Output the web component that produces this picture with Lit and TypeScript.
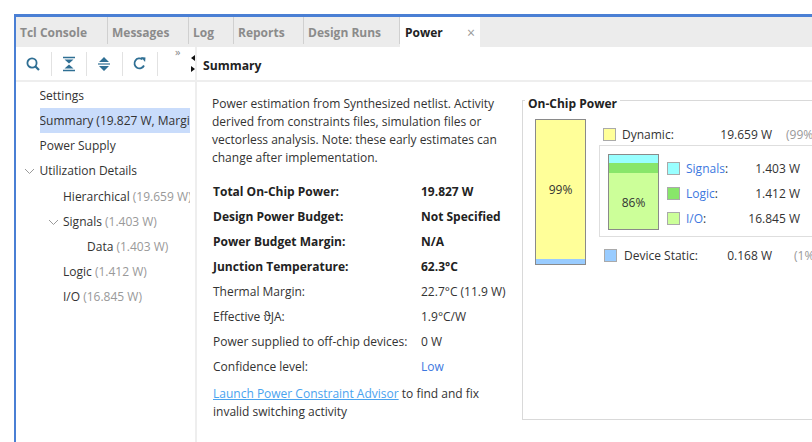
import { LitElement, html, css, svg } from "lit";
import { customElement } from "lit/decorators.js";

const tabs = ["Tcl Console", "Messages", "Log", "Reports", "Design Runs"];
const tabW = [92, 81, 45, 70, 96];

@customElement("app-root")
export class AppRoot extends LitElement {
  static styles = css`
    :host { display: block; width: 812px; height: 442px; overflow: hidden; background: #fff;
      font-family: "Open Sans", "Noto Sans", sans-serif; font-size: 12px; color: #333; box-sizing: border-box; padding: 14px 0 0 14px; }
    .frame { height: 428px; border-top: 3px solid #4a7fd4; border-left: 2px solid #4a7fd4; display: flex; flex-direction: column; overflow: hidden; }
    .tabs { height: 30px; background: #ececec; display: flex; flex: none; }
    .tab { box-sizing: border-box; height: 27px; padding-left: 4px; line-height: 32px; font-weight: 700; color: #8b8b8b; border-right: 1px solid #d0d0d0; flex: none; }
    .tab.on { width: 80px; height: 30px; background: #fff; color: #222; border: none; padding-left: 5px; display: flex; justify-content: space-between; padding-right: 5px; }
    .tab.on span:last-child { color: #999; font-weight: 400; font-size: 14px; }
    .main { flex: 1; display: grid; grid-template-columns: 181px 1fr; grid-template-rows: 35px 1fr; min-height: 0; }
    .tools { border-bottom: 2px solid #eeeeee; border-right: 2px solid #eeeeee; display: flex; align-items: center; position: relative; height: 35px; box-sizing: border-box; }
    .tool { width: 35.5px; height: 24px; display: flex; align-items: center; justify-content: center; border-right: 1px solid #e2e2e2; box-sizing: border-box; flex: none; }
    .more { position: absolute; left: 159px; top: -2px; font-size: 11px; color: #888; line-height: 14px; }
    .grip { position: absolute; left: 174px; top: 8px; }
    .head { border-bottom: 2px solid #eeeeee; height: 35px; box-sizing: border-box; padding-left: 6px; font-weight: 700; color: #222; line-height: 37px; font-size: 12.2px; }
    .tree { border-right: 2px solid #eeeeee; padding-top: 1px; overflow: hidden; min-height: 0; }
    .row { height: 25px; line-height: 25px; white-space: nowrap; overflow: hidden; width: 150px; position: relative; color: #333; }
    .row .g { color: #999; }
    .row.sel { background: #c9dcfb; }
    .row.l0 { margin-left: 23.5px; }
    .row.l1 { margin-left: 47px; width: 127px; }
    .row.l2 { margin-left: 71px; width: 110px; }
    .row.gapped { margin-top: 1px; }
    .chevwrap { position: relative; }
    .chev { position: absolute; top: 10px; }
    .content { display: flex; min-width: 0; overflow: hidden; }
    .left { width: 325px; flex: none; padding: 13px 0 0 15px; box-sizing: border-box; }
    .para { line-height: 18px; width: 295px; margin: 0; }
    .table { margin-top: 12px; display: grid; grid-template-columns: 208px 1fr; grid-auto-rows: 25px; line-height: 25px; white-space: nowrap; }
    .table > div { padding-left: 1px; }
    .b { font-weight: 700; color: #222; }
    .lnk { color: #3d78e0; }
    .advisor { margin: 6px 0 0 1px; line-height: 18px; }
    .advisor a { color: #4aa3ef; text-decoration: underline; }
    .panel { flex: none; width: 330px; height: 320px; margin: 18px 0 0 0; border: 1px solid #d9d9d9; box-sizing: border-box; position: relative; color: #333; }
    .legend { position: absolute; left: 2px; top: -5px; padding: 0 3px; background: #fff; font-weight: 700; color: #222; line-height: 15px; }
    .body { display: flex; padding: 18px 0 0 12px; gap: 17px; }
    .bar { width: 51px; height: 146px; box-sizing: border-box; border: 1.5px solid #8a8a8a; display: flex; flex-direction: column; flex: none; }
    .fill { background: #ffff99; flex: 1; display: flex; align-items: center; justify-content: center; }
    .cap { background: #99ccff; height: 5px; }
    .side { flex: 1; min-width: 0; }
    .line { display: grid; align-items: center; height: 16px; white-space: nowrap; }
    .line.dyn { grid-template-columns: 13px 6px 90px 60px 14px auto; margin-top: 7px; }
    .line.sta { grid-template-columns: 13px 7px 100px 48px 22px auto; margin: 10px 0 0 1px; }
    .r { text-align: right; }
    .g2 { color: #999; }
    .sw { width: 13px; height: 13px; box-sizing: border-box; border: 1.5px solid #aaa; display: block; }
    .inner { margin: 3px 0 0 -4px; height: 92px; border: 1px solid #dedede; border-right: none; box-sizing: border-box; padding: 8px 0 0 8px; display: flex; gap: 8px; width: 220px; }
    .ibar { width: 51px; height: 76px; box-sizing: border-box; border: 1.5px solid #8a8a8a; display: flex; flex-direction: column; flex: none; }
    .lg { display: flex; flex-direction: column; gap: 9px; padding-top: 6px; }
    .line.it { grid-template-columns: 13px 6px 50px 64px; }
    .s-cy { background: #99ffff; } .s-gr { background: #88e66a; } .s-li { background: #ccff99; }
    .c1 { height: 8px; } .c2 { height: 10px; }
    .c3 { flex: 1; display: flex; align-items: center; justify-content: center; padding-top: 2px; }
  `;

  render() {
    const icon = (c: unknown) => html`<div class="tool">${c}</div>`;
    return html`<div class="frame">
      <div class="tabs">
        ${tabs.map((t, i) => html`<div class="tab" style="width:${tabW[i]}px">${t}</div>`)}
        <div class="tab on"><span>Power</span><span>×</span></div>
      </div>
      <div class="main">
        <div class="tools">
          ${icon(svg`<svg width="16" height="16" viewBox="0 0 16 16"><circle cx="7" cy="7" r="4.6" fill="none" stroke="#2f6f94" stroke-width="1.8"/><path d="M10.5 10.5L14 14" stroke="#2f6f94" stroke-width="2.2"/></svg>`)}
          ${icon(svg`<svg width="14" height="16" viewBox="0 0 14 16"><path d="M1 1.5h12M1 14.5h12" stroke="#2f6f94" stroke-width="1.5"/><path d="M2.5 3.5h9L7 7.5zM2.5 12.5h9L7 8.5z" fill="#2f6f94"/></svg>`)}
          ${icon(svg`<svg width="14" height="16" viewBox="0 0 14 16"><path d="M7 1l5 5H2zM7 15l5-5H2z" fill="#2f6f94"/><path d="M1 8h12" stroke="#2f6f94" stroke-width="1.2"/></svg>`)}
          ${icon(svg`<svg width="15" height="15" viewBox="0 0 15 15"><path d="M12 9.5A5 5 0 1 1 10.5 3.4" fill="none" stroke="#2f6f94" stroke-width="1.8"/><path d="M8.8 1l4.7.4-.4 4.7z" fill="#2f6f94"/></svg>`)}
          <span class="more">»</span>
          <svg class="grip" width="6" height="20" viewBox="0 0 6 20"><path d="M5 0v6L1 3zM1 11v6l4-3z" fill="#111"/></svg>
        </div>
        <div class="head">Summary</div>
        <div class="tree">
          <div class="row l0">Settings</div>
          <div class="row l0 sel">Summary (19.827 W, Margin: N/A)</div>
          <div class="row l0">Power Supply</div>
          <div class="chevwrap">${svg`<svg class="chev" style="left:8px" width="11" height="7" viewBox="0 0 11 7"><path d="M1 1l4.5 4.5L10 1" fill="none" stroke="#9a9a9a"/></svg>`}<div class="row l0">Utilization Details</div></div>
          <div class="row l1 gapped">Hierarchical <span class="g">(19.659 W)</span></div>
          <div class="chevwrap">${svg`<svg class="chev" style="left:32px" width="11" height="7" viewBox="0 0 11 7"><path d="M1 1l4.5 4.5L10 1" fill="none" stroke="#9a9a9a"/></svg>`}<div class="row l1">Signals <span class="g">(1.403 W)</span></div></div>
          <div class="row l2">Data <span class="g">(1.403 W)</span></div>
          <div class="row l1">Logic <span class="g">(1.412 W)</span></div>
          <div class="row l1">I/O <span class="g">(16.845 W)</span></div>
        </div>
        <div class="content">
          <div class="left">
            <p class="para">Power estimation from Synthesized netlist. Activity derived from constraints files, simulation files or vectorless analysis. Note: these early estimates can change after implementation.</p>
            <div class="table">
              <div class="b">Total On-Chip Power:</div><div class="b">19.827 W</div>
              <div class="b">Design Power Budget:</div><div class="b">Not Specified</div>
              <div class="b">Power Budget Margin:</div><div class="b">N/A</div>
              <div class="b">Junction Temperature:</div><div class="b">62.3°C</div>
              <div>Thermal Margin:</div><div>22.7°C (11.9 W)</div>
              <div>Effective ϑJA:</div><div>1.9°C/W</div>
              <div>Power supplied to off-chip devices:</div><div>0 W</div>
              <div>Confidence level:</div><div class="lnk">Low</div>
            </div>
            <p class="advisor para"><a>Launch Power Constraint Advisor</a> to find and fix invalid switching activity</p>
          </div>
          <div class="panel">
            <div class="legend">On-Chip Power</div>
            <div class="body">
              <div class="bar"><div class="fill">99%</div><div class="cap"></div></div>
              <div class="side">
                <div class="line dyn"><span class="sw" style="background:#ffff99"></span><span></span><span>Dynamic:</span><span class="r">19.659 W</span><span></span><span class="g2">(99%)</span></div>
                <div class="inner">
                  <div class="ibar"><div class="c1 s-cy"></div><div class="c2 s-gr"></div><div class="c3 s-li">86%</div></div>
                  <div class="lg">
                    <div class="line it"><span class="sw s-cy"></span><span></span><span><span class="lnk">Signals</span>:</span><span class="r">1.403 W</span></div>
                    <div class="line it"><span class="sw s-gr"></span><span></span><span><span class="lnk">Logic</span>:</span><span class="r">1.412 W</span></div>
                    <div class="line it"><span class="sw s-li"></span><span></span><span><span class="lnk">I/O</span>:</span><span class="r">16.845 W</span></div>
                  </div>
                </div>
                <div class="line sta"><span class="sw" style="background:#99ccff"></span><span></span><span>Device Static:</span><span class="r">0.168 W</span><span></span><span class="g2">(1%)</span></div>
              </div>
            </div>
          </div>
        </div>
      </div>
    </div>`;
  }
}
